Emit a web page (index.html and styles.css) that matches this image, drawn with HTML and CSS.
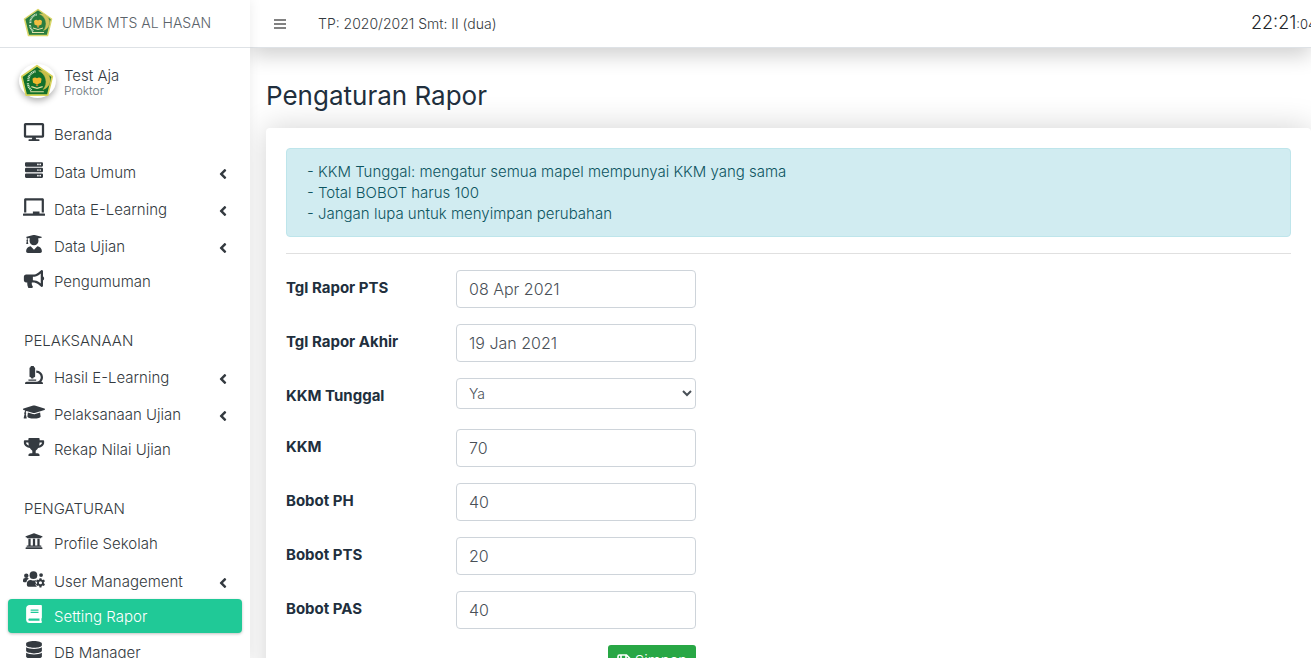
FILE: index.html
```html
<!DOCTYPE html>
<html lang="id">
<head>
<meta charset="utf-8">
<meta name="viewport" content="width=device-width, initial-scale=1">
<title>Pengaturan Rapor</title>
<link rel="stylesheet" href="styles.css">
</head>
<body>
<svg class="defs" aria-hidden="true">
  <symbol id="emblem" viewBox="0 0 60 60">
    <path d="M30 3 57 22 49 55H11L3 22Z" fill="#12702b" stroke="#d8d35a" stroke-width="3" stroke-linejoin="round"/>
    <path d="M15 30a15 15 0 0 1 13-17M14 34a17 17 0 0 0 7 13" fill="none" stroke="#cfe3c4" stroke-width="4" stroke-dasharray="2 1"/>
    <path d="M33 12a17 17 0 0 1 8 33a21 21 0 0 0-8-33Z" fill="#c9bd4a" stroke="#c9bd4a" stroke-width="1"/>
    <path d="M22 26q4-4 8-1 4-3 8 1l-1 7-7 3-7-3Z" fill="#f0b92d"/>
    <path d="M20 40l10 3 10-3M18 49h24" fill="none" stroke="#dfe0a0" stroke-width="2"/>
    <path d="M28 36h4v3h-4Z" fill="#b9822b"/>
  </symbol>
  <symbol id="desktop" viewBox="0 0 576 512"><path d="M528 0H48C21.500 0 0 21.500 0 48v320c0 26.500 21.500 48 48 48h192l-16 48h-72c-13.300 0-24 10.700-24 24s10.700 24 24 24h272c13.300 0 24-10.700 24-24s-10.700-24-24-24h-72l-16-48h192c26.500 0 48-21.500 48-48V48c0-26.500-21.500-48-48-48zm-16 352H64V64h448v288z"/></symbol>
  <symbol id="server" viewBox="0 0 512 512"><path fill-rule="evenodd" d="M32 32h448a32 32 0 0 1 32 32v64a32 32 0 0 1-32 32H32a32 32 0 0 1-32-32V64a32 32 0 0 1 32-32zM408 96a24 24 0 1 0 48 0a24 24 0 1 0-48 0zm-64 0a24 24 0 1 0 48 0a24 24 0 1 0-48 0zM32 192h448a32 32 0 0 1 32 32v64a32 32 0 0 1-32 32H32a32 32 0 0 1-32-32v-64a32 32 0 0 1 32-32zM408 256a24 24 0 1 0 48 0a24 24 0 1 0-48 0zm-64 0a24 24 0 1 0 48 0a24 24 0 1 0-48 0zM32 352h448a32 32 0 0 1 32 32v64a32 32 0 0 1-32 32H32a32 32 0 0 1-32-32v-64a32 32 0 0 1 32-32zM408 416a24 24 0 1 0 48 0a24 24 0 1 0-48 0zm-64 0a24 24 0 1 0 48 0a24 24 0 1 0-48 0z"/></symbol>
  <symbol id="board" viewBox="0 0 640 512"><path d="M96 64h448v352h64V40c0-22.060-17.940-40-40-40H72C49.940 0 32 17.940 32 40v376h64V64zm528 384H480v-64H288v64H16c-8.840 0-16 7.160-16 16v32c0 8.840 7.160 16 16 16h608c8.840 0 16-7.160 16-16v-32c0-8.840-7.160-16-16-16z"/></symbol>
  <symbol id="student" viewBox="0 0 448 512"><path d="M319.400 320.600L224 416l-95.400-95.400C57.100 323.700 0 382.200 0 454.400v9.600c0 26.500 21.500 48 48 48h352c26.500 0 48-21.500 48-48v-9.600c0-72.200-57.100-130.700-128.600-133.800zM13.600 79.800l6.400 1.500v58.400c-7 4.200-12 11.500-12 20.300 0 8.400 4.600 15.400 11.100 19.700L3.500 242c-1.700 6.900 2.100 14 7.600 14h41.800c5.500 0 9.300-7.100 7.600-14l-15.600-62.300C51.400 175.400 56 168.400 56 160c0-8.800-5-16.100-12-20.300V87.100l66 15.900c-8.600 17.200-14 36.400-14 57 0 70.700 57.300 128 128 128s128-57.300 128-128c0-20.600-5.300-39.800-14-57l96.300-23.200c18.200-4.400 18.200-27.100 0-31.500l-190.400-46c-13-3.100-26.700-3.100-39.700 0L13.600 48.200c-18.100 4.400-18.100 27.200 0 31.600z"/></symbol>
  <symbol id="horn" viewBox="0 0 576 512"><path d="M576 240c0-23.630-12.950-44.040-32-55.120V32.010C544 23.260 537.020 0 512 0c-7.120 0-14.190 2.380-19.980 7.020l-85.030 68.030C364.280 109.190 310.660 128 256 128H64c-35.350 0-64 28.650-64 64v96c0 35.350 28.650 64 64 64h33.700c-1.390 10.480-2.180 21.140-2.180 32 0 39.770 9.260 77.350 25.560 110.940 5.190 10.690 16.520 17.060 28.400 17.060h74.280c26.050 0 41.690-29.840 25.900-50.560-16.400-21.520-26.150-48.360-26.150-77.440 0-11.110 1.620-21.790 4.410-32H256c54.660 0 108.280 18.810 150.980 52.950l85.030 68.030a32.023 32.023 0 0 0 19.980 7.020c24.920 0 32-22.780 32-32V295.130C563.050 284.040 576 263.630 576 240zm-96 141.420l-33.050-26.440C392.950 311.780 325.120 288 256 288v-96c69.120 0 136.950-23.780 190.950-66.980L480 98.580v282.840z"/></symbol>
  <symbol id="microscope" viewBox="0 0 512 512"><path d="M160 320h12v16c0 8.840 7.160 16 16 16h40c8.840 0 16-7.160 16-16v-16h12c17.670 0 32-14.330 32-32V64c0-17.670-14.330-32-32-32V16c0-8.840-7.160-16-16-16h-64c-8.840 0-16 7.160-16 16v16c-17.670 0-32 14.330-32 32v224c0 17.670 14.330 32 32 32zm304 128h-1.290C493.240 413.990 512 369.200 512 320c0-105.880-86.120-192-192-192v64c70.580 0 128 57.420 128 128s-57.420 128-128 128H48c-26.510 0-48 21.490-48 48 0 8.840 7.160 16 16 16h480c8.840 0 16-7.160 16-16 0-26.510-21.490-48-48-48zm-360-32h208c4.420 0 8-3.580 8-8v-16c0-4.420-3.580-8-8-8H104c-4.420 0-8 3.580-8 8v16c0 4.420 3.580 8 8 8z"/></symbol>
  <symbol id="cap" viewBox="0 0 640 512"><path d="M622.340 153.200L343.400 67.500c-15.200-4.670-31.600-4.670-46.790 0L17.660 153.200c-23.540 7.230-23.540 38.360 0 45.590l48.630 14.940c-10.670 13.190-17.230 29.280-17.880 46.900C38.780 266.150 32 276.110 32 288c0 10.780 5.680 19.850 13.860 25.650L20.330 428.530C18.110 438.520 25.710 448 35.940 448h56.110c10.240 0 17.840-9.480 15.620-19.470L82.140 313.650C90.320 307.850 96 298.780 96 288c0-11.570-6.470-21.250-15.660-26.870.76-15.020 8.440-28.300 20.690-36.720L296.600 284.500c9.060 2.780 26.440 6.250 46.790 0l278.950-85.700c23.550-7.240 23.550-38.360 0-45.600zM352.790 315.090c-28.530 8.760-52.840 3.920-65.590 0l-145.020-44.550L128 384c0 35.350 85.960 64 192 64s192-28.650 192-64l-14.180-113.470-145.030 44.560z"/></symbol>
  <symbol id="trophy" viewBox="0 0 576 512"><path d="M552 64H448V24c0-13.300-10.700-24-24-24H152c-13.300 0-24 10.700-24 24v40H24C10.700 64 0 74.700 0 88v56c0 35.700 22.500 72.400 61.900 100.700 31.500 22.700 69.800 37.100 110 41.700C203.300 338.500 240 360 240 360v72h-48c-35.300 0-64 20.700-64 56v12c0 6.600 5.400 12 12 12h296c6.600 0 12-5.400 12-12v-12c0-35.300-28.700-56-64-56h-48v-72s36.700-21.500 68.100-73.600c40.300-4.600 78.600-19 110-41.700 39.300-28.300 61.900-65 61.900-100.700V88c0-13.300-10.700-24-24-24zM99.300 192.800C74.900 175.200 64 155.600 64 144v-16h64.200c1 32.600 5.800 61.200 12.800 86.200-15.100-5.200-29.200-12.400-41.700-21.400zM512 144c0 16.100-17.700 36.100-35.300 48.800-12.500 9-26.700 16.200-41.800 21.400 7-25 11.800-53.600 12.800-86.200H512v16z"/></symbol>
  <symbol id="school" viewBox="0 0 512 512"><path d="M496 128v16a8 8 0 0 1-8 8h-24v12c0 6.627-5.373 12-12 12H60c-6.627 0-12-5.373-12-12v-12H24a8 8 0 0 1-8-8v-16a8 8 0 0 1 4.941-7.392l232-88a7.996 7.996 0 0 1 6.118 0l232 88A8 8 0 0 1 496 128zm-24 304H40c-13.255 0-24 10.745-24 24v16a8 8 0 0 0 8 8h464a8 8 0 0 0 8-8v-16c0-13.255-10.745-24-24-24zM96 192v192H60c-6.627 0-12 5.373-12 12v20h416v-20c0-6.627-5.373-12-12-12h-36V192h-64v192h-64V192h-64v192h-64V192H96z"/></symbol>
  <symbol id="users" viewBox="0 0 640 512">
    <circle cx="96" cy="160" r="64"/><circle cx="304" cy="144" r="112"/><circle cx="526" cy="142" r="54"/>
    <path d="M0 320v-32a64 64 0 0 1 64-64h64q26 0 45 19-66 36-76 109H32a32 32 0 0 1-32-32ZM112 432v-29a115 115 0 0 1 115-115h8q69 30 138 0h8l-10 22-9 40 18 36-18 36 20 38 28 20H160a48 48 0 0 1-48-48Z"/>
    <path fill-rule="evenodd" d="M480 232h56l8 42 26 14 40-14 28 48-32 28v32l32 28-28 48-40-14-26 15-8 41h-56l-8-41-26-15-40 14-28-48 32-28v-32l-32-28 28-48 40 14 26-14ZM462 366a46 46 0 1 0 92 0a46 46 0 1 0-92 0Z"/>
  </symbol>
  <symbol id="book" viewBox="0 0 448 512"><path d="M448 360V24c0-13.300-10.700-24-24-24H96C43 0 0 43 0 96v320c0 53 43 96 96 96h328c13.300 0 24-10.700 24-24v-16c0-7.500-3.500-14.300-8.900-18.700-4.200-15.400-4.200-59.300 0-74.700 5.400-4.300 8.900-11.100 8.900-18.600zM128 134c0-3.300 2.700-6 6-6h212c3.300 0 6 2.700 6 6v20c0 3.300-2.700 6-6 6H134c-3.300 0-6-2.700-6-6v-20zm0 64c0-3.300 2.700-6 6-6h212c3.300 0 6 2.700 6 6v20c0 3.300-2.700 6-6 6H134c-3.300 0-6-2.700-6-6v-20zm253.400 250H96c-17.700 0-32-14.300-32-32 0-17.600 14.400-32 32-32h285.400c-1.900 17.100-1.900 46.900 0 64z"/></symbol>
  <symbol id="database" viewBox="0 0 448 512"><path d="M448 73.143v45.714C448 159.143 347.667 192 224 192S0 159.143 0 118.857V73.143C0 32.857 100.333 0 224 0s224 32.857 224 73.143zM448 176v102.857C448 319.143 347.667 352 224 352S0 319.143 0 278.857V176c48.125 33.143 136.208 48.572 224 48.572S399.874 209.143 448 176zm0 160v102.857C448 479.143 347.667 512 224 512S0 479.143 0 438.857V336c48.125 33.143 136.208 48.572 224 48.572S399.874 369.143 448 336z"/></symbol>
  <symbol id="angle" viewBox="0 0 256 512"><path d="M31.700 239l136-136c9.400-9.400 24.600-9.400 33.900 0l22.600 22.600c9.400 9.400 9.400 24.600 0 33.900L127.900 256l96.400 96.400c9.400 9.400 9.400 24.600 0 33.900L201.700 409c-9.400 9.400-24.600 9.400-33.900 0l-136-136c-9.500-9.400-9.500-24.600-.1-34z"/></symbol>
  <symbol id="save" viewBox="0 0 14 14"><path d="M1 2.500V11.500Q1 13 2.500 13H11.500Q13 13 13 11.500V4.500L9.500 1H2.500Q1 1 1 2.500ZM4 1V5H9V1" fill="none" stroke="currentColor" stroke-width="1.600"/><circle cx="7" cy="9" r="1.700"/></symbol>
</svg>
<div class="shell">
  <aside class="sidebar">
    <a class="brand" href="#"><svg class="brand-logo"><use href="#emblem"/></svg><span>UMBK MTS AL HASAN</span></a>
    <div class="user">
      <div class="avatar"><svg class="avatar-logo"><use href="#emblem"/></svg></div>
      <div><div class="user-name">Test Aja</div><div class="user-role">Proktor</div></div>
    </div>
    <nav class="menu">
      <a class="item" href="#"><svg class="icon"><use href="#desktop"/></svg><span>Beranda</span></a>
      <a class="item tree" href="#"><svg class="icon"><use href="#server"/></svg><span>Data Umum</span><svg class="angle"><use href="#angle"/></svg></a>
      <a class="item tree" href="#"><svg class="icon"><use href="#board"/></svg><span>Data E-Learning</span><svg class="angle"><use href="#angle"/></svg></a>
      <a class="item tree" href="#"><svg class="icon"><use href="#student"/></svg><span>Data Ujian</span><svg class="angle"><use href="#angle"/></svg></a>
      <a class="item" href="#"><svg class="icon"><use href="#horn"/></svg><span>Pengumuman</span></a>
      <div class="section">PELAKSANAAN</div>
      <a class="item tree" href="#"><svg class="icon"><use href="#microscope"/></svg><span>Hasil E-Learning</span><svg class="angle"><use href="#angle"/></svg></a>
      <a class="item tree" href="#"><svg class="icon"><use href="#cap"/></svg><span>Pelaksanaan Ujian</span><svg class="angle"><use href="#angle"/></svg></a>
      <a class="item" href="#"><svg class="icon"><use href="#trophy"/></svg><span>Rekap Nilai Ujian</span></a>
      <div class="section">PENGATURAN</div>
      <a class="item" href="#"><svg class="icon"><use href="#school"/></svg><span>Profile Sekolah</span></a>
      <a class="item tree" href="#"><svg class="icon"><use href="#users"/></svg><span>User Management</span><svg class="angle"><use href="#angle"/></svg></a>
      <a class="item active" href="#" aria-current="page"><svg class="icon"><use href="#book"/></svg><span>Setting Rapor</span></a>
      <a class="item" href="#"><svg class="icon"><use href="#database"/></svg><span>DB Manager</span></a>
    </nav>
  </aside>
  <div class="main">
    <header class="topbar">
      <button class="burger" type="button" aria-label="Menu"><span></span><span></span><span></span></button>
      <span>TP: 2020/2021 Smt: II (dua)</span>
      <div class="clock">22:21<small>:04</small></div>
    </header>
    <main class="content">
      <h1>Pengaturan Rapor</h1>
      <section class="card">
        <ul class="alert">
          <li>- KKM Tunggal: mengatur semua mapel mempunyai KKM yang sama</li>
          <li>- Total BOBOT harus 100</li>
          <li>- Jangan lupa untuk menyimpan perubahan</li>
        </ul>
        <hr>
        <form class="form">
          <label for="pts">Tgl Rapor PTS</label><input id="pts" type="text" value="08 Apr 2021">
          <label for="akhir">Tgl Rapor Akhir</label><input id="akhir" type="text" value="19 Jan 2021">
          <label for="tunggal">KKM Tunggal</label><select id="tunggal"><option>Ya</option><option>Tidak</option></select>
          <label for="kkm">KKM</label><input id="kkm" type="text" value="70">
          <label for="bph">Bobot PH</label><input id="bph" type="text" value="40">
          <label for="bpts">Bobot PTS</label><input id="bpts" type="text" value="20">
          <label for="bpas">Bobot PAS</label><input id="bpas" type="text" value="40">
          <button class="submit" type="submit"><svg class="save-icon"><use href="#save"/></svg><span>Simpan</span></button>
        </form>
      </section>
    </main>
  </div>
</div>
</body>
</html>
```
FILE: styles.css
```css
* { box-sizing: border-box; }
body {
  margin: 0;
  font: 300 15px/21px Inter, "Open Sans", sans-serif;
  color: #212f3d;
  background: #fff;
}
a { color: inherit; text-decoration: none; }
svg { fill: currentColor; flex: none; }
.defs { display: none; }
.shell { display: flex; height: 100vh; overflow: hidden; }

/* Sidebar */
.sidebar {
  flex: none;
  width: 250px;
  background: #fff;
  color: #343a40;
  z-index: 2;
  overflow: hidden;
  box-shadow: 0 0 12px rgba(0, 0, 0, .08);
}
.brand {
  display: flex;
  align-items: center;
  gap: 9px;
  height: 48px;
  padding: 0 0 2px 23px;
  border-bottom: 1px solid #dee2e6;
  color: #5b636a;
  font-size: 14px;
}
.brand-logo { width: 30px; height: 30px; opacity: .9; }
.user { display: flex; align-items: center; gap: 8px; padding: 16px 19px 0; }
.avatar {
  width: 37px;
  height: 34px;
  border-radius: 50%;
  box-shadow: 0 3px 6px rgba(0, 0, 0, .3);
}
.avatar-logo { display: block; width: 36px; height: 34px; }
.user-name { padding-top: 2px; line-height: 18px; }
.user-role { font-size: 12px; line-height: 12px; color: #6c757d; }
.menu { display: flex; flex-direction: column; gap: 2px; padding: 19px 8px 0; }
.item {
  display: flex;
  flex: none;
  align-items: center;
  gap: 9px;
  height: 34px;
  padding: 0 13px 0 15px;
  border-radius: 4px;
}
.tree { height: 35px; padding-top: 3px; }
.icon { width: 22px; height: 18px; margin-bottom: 5px; color: #343a40; }
.angle { width: 12px; height: 16px; margin: 3px 0 0 auto; }
.active {
  background: #20c997;
  color: #fff;
  box-shadow: 0 1px 3px rgba(0, 0, 0, .25);
}
.active .icon { color: #fff; }
.section { padding: 30px 16px 5px; }

/* Top bar */
.main { flex: 1; min-width: 0; display: flex; flex-direction: column; }
.topbar {
  display: flex;
  flex: none;
  align-items: center;
  height: 48px;
  padding-left: 24px;
  background: #fff;
  border-bottom: 1px solid #dee2e6;
  box-shadow: 0 8px 20px rgba(0, 0, 0, .18);
  color: #343a40;
  z-index: 1;
  font-size: 14px;
}
.burger {
  display: flex;
  flex-direction: column;
  gap: 2px;
  width: 12px;
  margin-right: 32px;
  padding: 0;
  border: 0;
  background: none;
}
.burger span { height: 2px; background: #828282; }
.clock {
  width: 60px;
  margin-left: auto;
  overflow: hidden;
  white-space: nowrap;
  font-size: 18px;
  line-height: 24px;
  color: #212529;
}
.clock small { font-size: 13px; }

/* Content */
.content { flex: 1; padding: 32px 0 0 16px; }
h1 { margin: 0 0 16px; font-size: 26px; line-height: 32px; font-weight: 400; }
.card {
  min-height: 100%;
  padding: 20px;
  border-radius: 4px;
  background: #fff;
  box-shadow: 0 0 32px rgba(0, 0, 0, .18);
}
.alert {
  margin: 0;
  padding: 12px 20px;
  list-style: none;
  background: #d1ecf1;
  border: 1px solid #bee5eb;
  border-radius: 4px;
  color: #0c5460;
}
hr { margin: 16px 0; border: 0; border-top: 1px solid #e0e0e0; }
.form {
  display: grid;
  grid-template-columns: 154px 240px;
  column-gap: 16px;
  row-gap: 16px;
  align-items: start;
}
label { padding: 7px 0; font-weight: 700; }
input, select {
  width: 100%;
  height: 38px;
  padding: 0 12px;
  border: 1px solid #ced4da;
  border-radius: 4px;
  background: #fff;
  color: #495057;
  font: 300 16px/24px Inter, "Open Sans", sans-serif;
}
select { height: 31px; padding: 0 0 0 8px; font-size: 14px; }
.submit {
  grid-column: 2;
  justify-self: end;
  display: flex;
  align-items: center;
  gap: 4px;
  height: 31px;
  padding: 0 9px;
  border: 0;
  border-radius: 3px;
  background: #28a745;
  color: #fff;
  font: 300 15px/21px Inter, "Open Sans", sans-serif;
}
.save-icon { width: 14px; height: 14px; }
```
